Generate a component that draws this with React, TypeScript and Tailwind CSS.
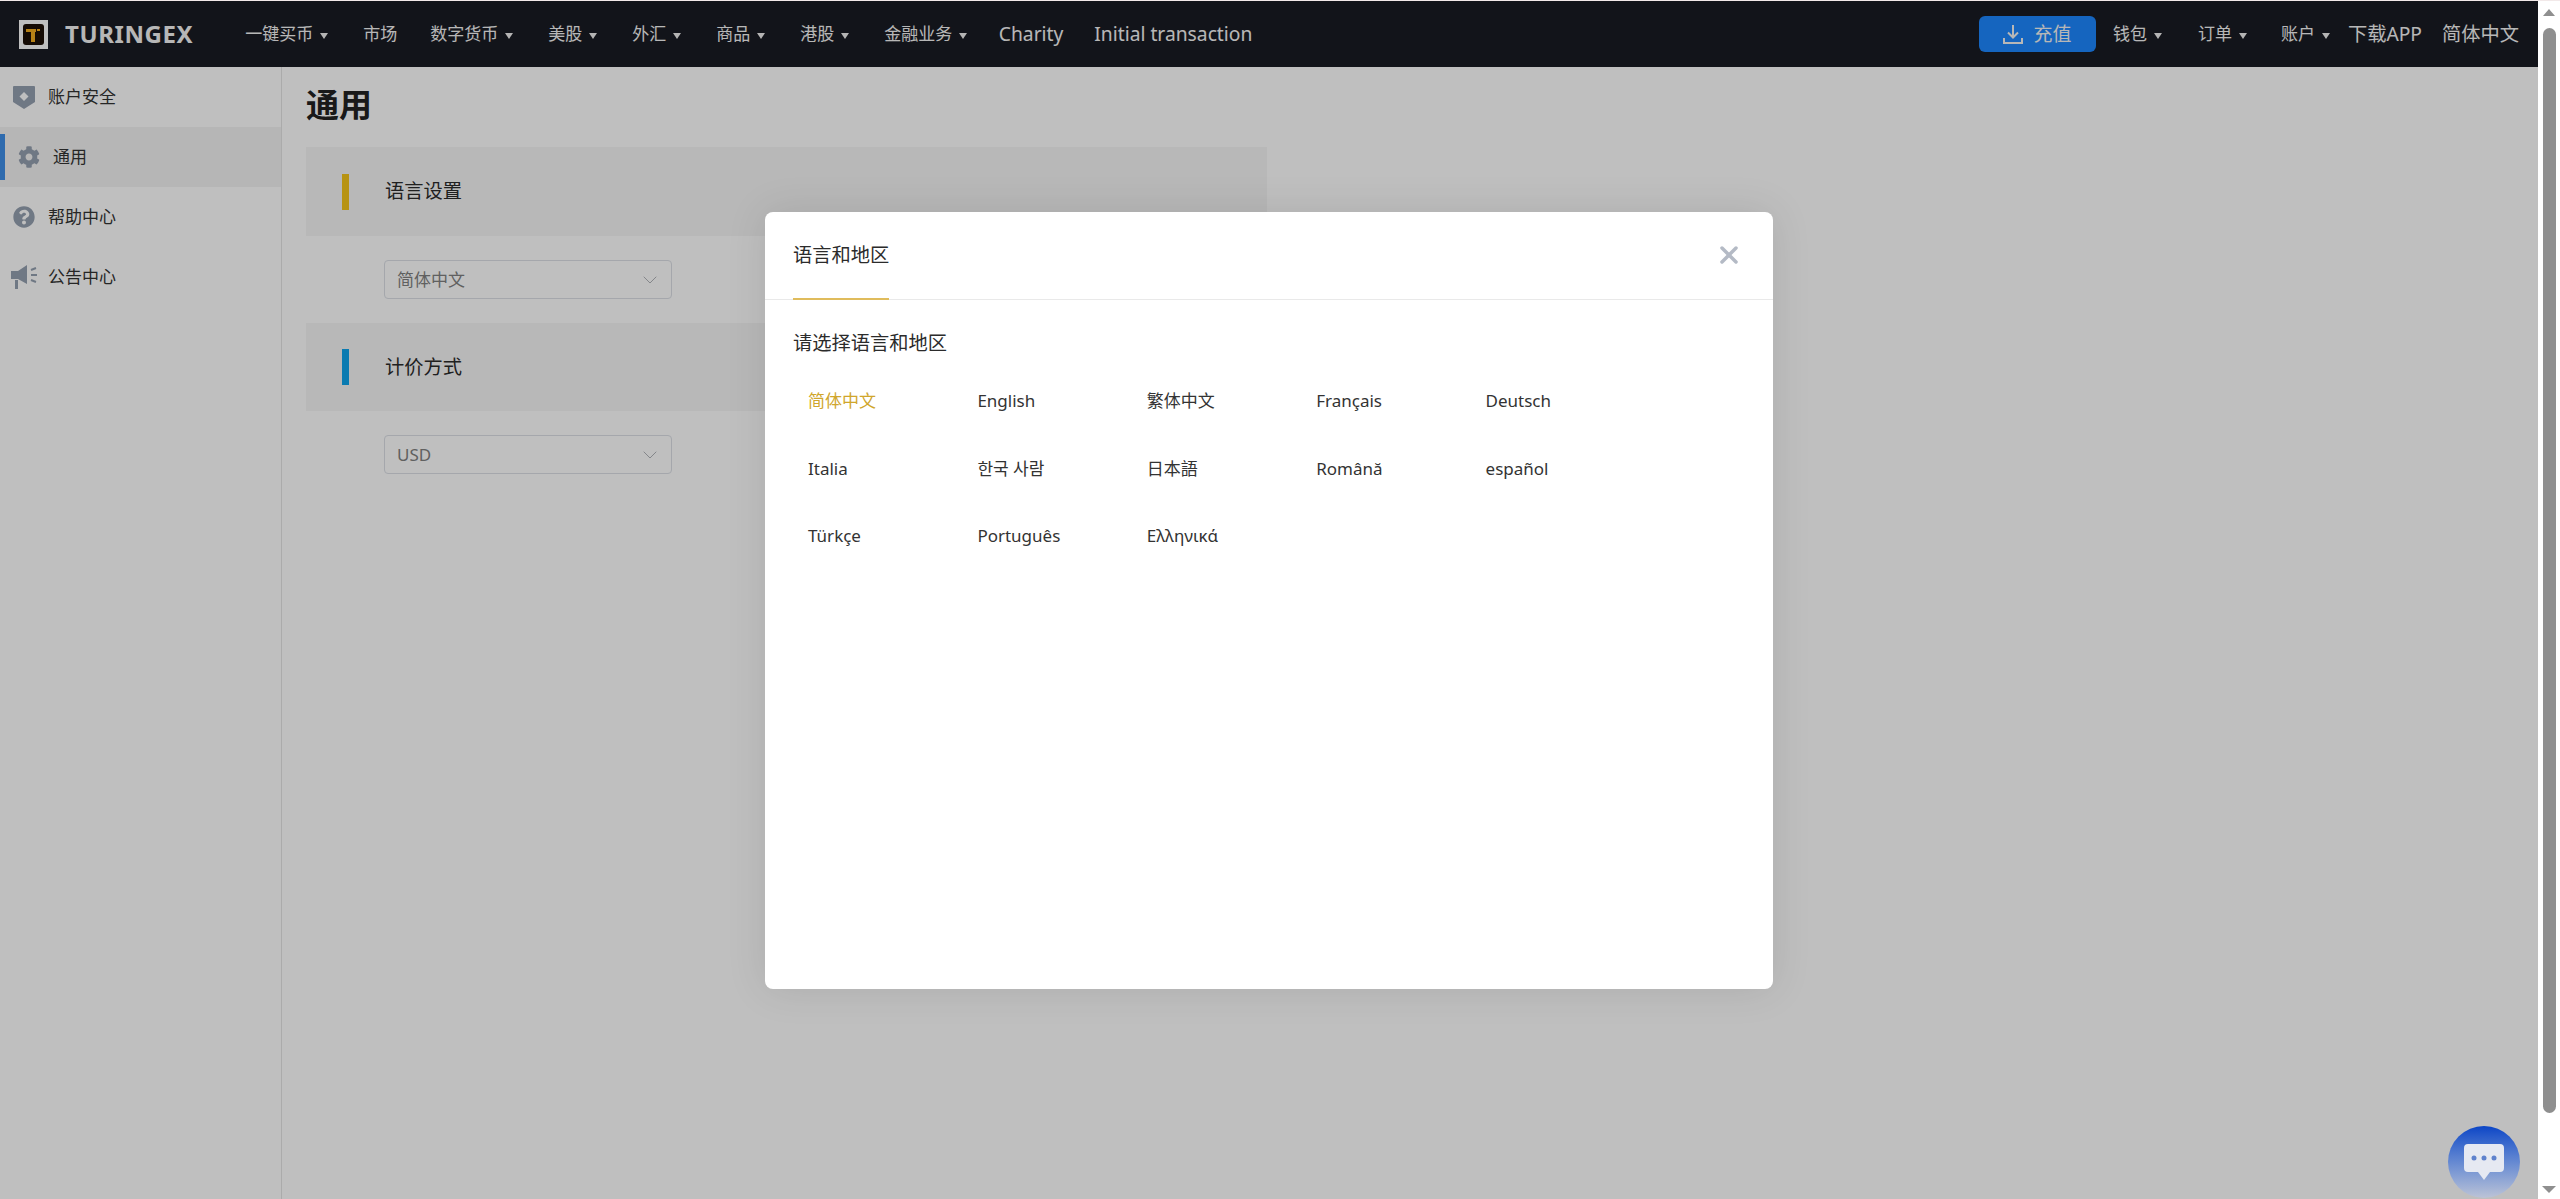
import React from 'react';
import { FaCog, FaQuestionCircle } from 'react-icons/fa';
import { ChevronDown, X } from 'lucide-react';

const navItems = [
  { label: '一键买币', caret: true },
  { label: '市场', caret: false },
  { label: '数字货币', caret: true },
  { label: '美股', caret: true },
  { label: '外汇', caret: true },
  { label: '商品', caret: true },
  { label: '港股', caret: true },
  { label: '金融业务', caret: true },
];

const languages = [
  '简体中文', 'English', '繁体中文', 'Français', 'Deutsch',
  'Italia', '한국 사람', '日本語', 'Română', 'español',
  'Türkçe', 'Português', 'Ελληνικά',
];

const Caret = () => (
  <span className="ml-[7px] w-0 h-0 border-x-[4px] border-x-transparent border-t-[6px] border-t-[#f0f0f0] mt-[3px]" />
);

const Logo = () => (
  <svg width="29" height="29" viewBox="0 0 29 29" className="shrink-0">
    <rect width="29" height="29" fill="#ffffff" />
    <rect x="4" y="4" width="21" height="21" rx="3" fill="#1c0f06" />
    <path d="M7 9h10v3h-1v10h-4V12H7z" fill="#f5ac1e" />
    <rect x="18" y="9" width="3" height="2" fill="#f5ac1e" />
  </svg>
);

const ShieldIcon = () => (
  <svg width="22" height="23" viewBox="0 0 22 23" className="shrink-0">
    <path d="M1 0h20a1 1 0 0 1 1 1v15l-11 7L0 16V1a1 1 0 0 1 1-1z" fill="#95a0b0" />
    <path d="M11 6l4.5 4.5L11 15l-4.5-4.5z" fill="#fff" />
  </svg>
);

const MegaphoneIcon = () => (
  <svg width="27" height="24" viewBox="0 0 27 24" className="shrink-0">
    <path d="M0 6h7l9-6v19l-9-5H0z" fill="#95a0b0" />
    <path d="M4 15h3v9H4z" fill="#95a0b0" />
    <path d="M20 5l5-2M20 10h6M20 15l5 2" stroke="#95a0b0" strokeWidth="2" />
  </svg>
);

const Sidebar = () => (
  <aside className="w-[282px] shrink-0 border-r border-[#e5e5e5] text-[17px] text-[#333]">
    <div className="h-[60px] flex items-center pl-[13px] gap-[13px]">
      <ShieldIcon />
      <span>账户安全</span>
    </div>
    <div className="relative h-[60px] flex items-center pl-[18px] gap-[13px] bg-[#f3f3f3]">
      <span className="absolute left-0 top-[7px] w-[5px] h-[46px] bg-[#3f8fe8]" />
      <FaCog size={22} color="#95a0b0" className="shrink-0" />
      <span>通用</span>
    </div>
    <div className="h-[60px] flex items-center pl-[13px] gap-[13px]">
      <FaQuestionCircle size={22} color="#95a0b0" className="shrink-0" />
      <span>帮助中心</span>
    </div>
    <div className="h-[60px] flex items-center pl-[11px] gap-[10px]">
      <MegaphoneIcon />
      <span>公告中心</span>
    </div>
  </aside>
);

const Section = ({ title, barColor, value, height }: { title: string; barColor: string; value: string; height: string }) => (
  <section className="mb-[24px]">
    <div className={`${height} w-[961px] bg-[#f6f6f6] flex items-center pl-[36px]`}>
      <span className={`${barColor} w-[7px] h-[36px]`} />
      <h2 className="ml-[36px] text-[19.25px] text-[#2b2b2b]">{title}</h2>
    </div>
    <div className="mt-[24px] ml-[78px] w-[288px] h-[39px] rounded-[4px] border border-[#dcdfe6] flex items-center justify-between pl-[12px] pr-[9px] text-[17px] text-[#808080]">
      <span>{value}</span>
      <ChevronDown size={24} strokeWidth={1} color="#b0b3b8" />
    </div>
  </section>
);

const LanguageModal = () => (
  <div className="w-[1008px] h-[777px] bg-white rounded-[8px] shadow-[0_0_40px_rgba(0,0,0,0.1)]">
    <div className="h-[88px] border-b border-[#e9e9e9] px-[28px] flex items-stretch justify-between">
      <div className="h-[88px] w-[96px] border-b-2 border-[#e0bc5c] flex items-center text-[19.25px] text-[#2b2b2b] whitespace-nowrap">语言和地区</div>
      <X size={28} strokeWidth={3} color="#b4bac5" className="self-center mr-[2px] mb-[2px]" />
    </div>
    <div className="px-[28px] pt-[30px]">
      <p className="h-[26px] leading-[26px] text-[19.25px] text-[#2b2b2b]">请选择语言和地区</p>
      <div className="mt-[11px] pl-[15px] grid grid-cols-[repeat(5,169.4px)] auto-rows-[67.5px]">
        {languages.map((lang, i) => (
          <div key={lang} className={`flex items-center text-[17px] ${i === 0 ? 'text-[#d0a62c]' : 'text-[#333]'}`}>
            {lang}
          </div>
        ))}
      </div>
    </div>
  </div>
);

const ChatButton = () => (
  <div className="absolute right-[18px] bottom-[1px] w-[72px] h-[72px] rounded-full bg-gradient-to-b from-[#0a45c6] to-[#bcc3d6] flex items-center justify-center">
    <svg width="40" height="36" viewBox="0 0 40 36">
      <path d="M4 0h32a4 4 0 0 1 4 4v20a4 4 0 0 1-4 4H26l-6 8-6-8H4a4 4 0 0 1-4-4V4a4 4 0 0 1 4-4z" fill="#e6e9f2" />
      <circle cx="10" cy="14" r="2.5" fill="#5f82cd" />
      <circle cx="20" cy="14" r="2.5" fill="#5f82cd" />
      <circle cx="30" cy="14" r="2.5" fill="#5f82cd" />
    </svg>
  </div>
);

const Scrollbar = () => (
  <div className="w-[22px] shrink-0 bg-white flex flex-col items-center pt-[8px] pb-[6px]">
    <span className="w-0 h-0 border-x-[6px] border-x-transparent border-b-[7px] border-b-[#8f8f8f]" />
    <div className="w-[13px] h-[1085px] mt-[12px] rounded-full bg-[#8f8f8f]" />
    <div className="flex-1" />
    <span className="w-0 h-0 border-x-[7px] border-x-transparent border-t-[7px] border-t-[#8f8f8f]" />
  </div>
);

export default function App() {
  return (
    <div className="h-screen flex flex-col overflow-hidden bg-white font-['Noto_Sans','Noto_Sans_CJK_SC',sans-serif]">
      <div className="h-px bg-[#f2e9e9] shrink-0" />
      <div className="flex-1 min-h-0 flex">
        <div className="relative flex-1 min-w-0 flex flex-col">
          <header className="h-[66px] shrink-0 bg-[#191b23] flex items-center pl-[19px] pr-[19px] text-[#f5f5f5]">
            <Logo />
            <span className="ml-[17px] text-[24px] font-bold tracking-[0.6px]">TURINGEX</span>
            <nav className="ml-[52px] flex items-center text-[17px]">
              {navItems.map((item) => (
                <span key={item.label} className={`flex items-center ${item.caret ? 'mr-[35px]' : 'mr-[33px]'}`}>
                  {item.label}
                  {item.caret && <Caret />}
                </span>
              ))}
              <span className="text-[19.25px] -ml-[3.5px] mr-[31px]">Charity</span>
              <span className="text-[19.25px]">Initial transaction</span>
            </nav>
            <div className="ml-auto flex items-center">
              <button className="w-[117px] h-[36px] rounded-[6px] bg-[#1c87ff] flex items-center justify-center gap-[10px] text-[19px] text-[#f5f5f5]">
                <svg width="20" height="20" viewBox="0 0 20 20" fill="none" stroke="#f5f5f5" strokeWidth="2">
                  <path d="M10 1v12M5 8.5l5 5 5-5M1 14v5h18v-5" />
                </svg>
                充值
              </button>
              <span className="ml-[17px] w-[85px] flex items-center text-[17px]">钱包<Caret /></span>
              <span className="w-[83px] flex items-center text-[17px]">订单<Caret /></span>
              <span className="w-[67px] flex items-center text-[17px]">账户<Caret /></span>
              <span className="text-[19.25px]">下载APP</span>
              <span className="ml-[20px] text-[19.25px]">简体中文</span>
            </div>
          </header>
          <main className="flex flex-1">
            <Sidebar />
            <div className="pl-[24px]">
              <h1 className="h-[76px] mb-[4px] flex items-center text-[33px] font-bold text-[#222]">通用</h1>
              <Section title="语言设置" barColor="bg-[#f5c518]" value="简体中文" height="h-[89px]" />
              <Section title="计价方式" barColor="bg-[#0ea5ec]" value="USD" height="h-[88px]" />
            </div>
          </main>
          <div className="absolute inset-0 bg-black/25 flex justify-center items-start pt-[211px]">
            <LanguageModal />
          </div>
          <ChatButton />
        </div>
        <Scrollbar />
      </div>
    </div>
  );
}
